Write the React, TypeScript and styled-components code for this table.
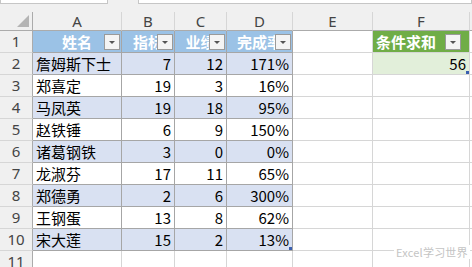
import React from "react";
import styled, { createGlobalStyle } from "styled-components";

const GlobalStyle = createGlobalStyle`
  html, body {
    margin: 0;
    padding: 0;
    background: #ffffff;
  }
  body {
    font-family: "Noto Sans CJK SC", "Noto Sans", sans-serif;
    overflow: hidden;
  }
`;

const COLS = ["A", "B", "C", "D", "E", "F"];
const HEADERS = ["姓名", "指标", "业绩", "完成率"];

const rows = [
  ["詹姆斯下士", 7, 12, "171%"],
  ["郑喜定", 19, 3, "16%"],
  ["马凤英", 19, 18, "95%"],
  ["赵铁锤", 6, 9, "150%"],
  ["诸葛钢铁", 3, 0, "0%"],
  ["龙淑芬", 17, 11, "65%"],
  ["郑德勇", 2, 6, "300%"],
  ["王钢蛋", 13, 8, "62%"],
  ["宋大莲", 15, 2, "13%"],
];

const Page = styled.div`
  position: relative;
  width: 472px;
  height: 267px;
  overflow: hidden;
  background: #f0f0f0;
`;

const TopStrip = styled.div`
  display: flex;
  height: 12px;
  gap: 30px;
`;

const TopBox = styled.div<{ $w: string }>`
  width: ${(p) => p.$w};
  flex: ${(p) => (p.$w === "auto" ? 1 : "none")};
  height: 3px;
  background: #ffffff;
  border: 1px solid #c6c6c6;
  border-top: none;
`;

const Grid = styled.div`
  display: grid;
  grid-template-columns: 33px 89px 53px 52px 66px 80px 97px 1fr;
  grid-template-rows: 19px;
  grid-auto-rows: 22px;
  background: #ffffff;
`;

const ColHead = styled.div`
  box-sizing: border-box;
  background: #f0f0f0;
  border-right: 1px solid #d6d6d6;
  border-bottom: 1px solid #ababab;
  color: #444444;
  font-family: "Noto Sans", "DejaVu Sans", sans-serif;
  font-size: 15px;
  line-height: 18px;
  text-align: center;
`;

const Corner = styled.div`
  box-sizing: border-box;
  position: relative;
  background: #f0f0f0;
  border-right: 1px solid #ababab;
  border-bottom: 1px solid #ababab;
  &::after {
    content: "";
    position: absolute;
    right: 3px;
    bottom: 3px;
    width: 0;
    height: 0;
    border-left: 12px solid transparent;
    border-bottom: 12px solid #b4b4b4;
  }
`;

const RowHead = styled.div`
  box-sizing: border-box;
  background: #f0f0f0;
  border-right: 1px solid #ababab;
  border-bottom: 1px solid #d6d6d6;
  color: #444444;
  font-family: "Noto Sans", "DejaVu Sans", sans-serif;
  font-size: 15px;
  line-height: 21px;
  text-align: center;
`;

type Tone = "plain" | "band" | "head" | "green" | "mint" | "empty";

const toneBg: Record<Tone, string> = {
  plain: "#ffffff",
  band: "#d9e1f2",
  head: "#9bc2e6",
  green: "#70ad47",
  mint: "#e2efda",
  empty: "#ffffff",
};

const inTable = (t: Tone) => t === "plain" || t === "band" || t === "head";

const Cell = styled.div<{ $tone: Tone; $align?: "left" | "right" | "center" }>`
  box-sizing: border-box;
  position: relative;
  overflow: hidden;
  white-space: nowrap;
  background: ${(p) => toneBg[p.$tone]};
  border-right: 1px solid ${(p) => (inTable(p.$tone) ? "#a6a6a6" : "#d6d6d6")};
  border-bottom: 1px solid ${(p) => (inTable(p.$tone) ? "#a6a6a6" : "#d6d6d6")};
  color: ${(p) => (p.$tone === "head" || p.$tone === "green" ? "#ffffff" : "#000000")};
  font-weight: ${(p) => (p.$tone === "head" || p.$tone === "green" ? 700 : 400)};
  font-size: 15px;
  line-height: 21px;
  text-align: ${(p) => p.$align || "left"};
  padding: 0 3px;
`;

const FilterBtn = styled.span<{ $right?: number }>`
  position: absolute;
  top: 3px;
  right: ${(p) => p.$right ?? 1}px;
  box-sizing: border-box;
  width: 16px;
  height: 16px;
  background: #f4f4f4;
  border: 1px solid #9a9a9a;
  &::after {
    content: "";
    position: absolute;
    left: 4px;
    top: 6px;
    border-left: 3px solid transparent;
    border-right: 3px solid transparent;
    border-top: 3px solid #555555;
  }
`;

const FillHandle = styled.span`
  position: absolute;
  right: 0;
  bottom: 0;
  width: 3px;
  height: 3px;
  background: #3a5fb0;
`;

const Watermark = styled.div`
  position: absolute;
  left: 394px;
  top: 245px;
  padding: 0 2px;
  background: #ffffff;
  color: #c4c4c4;
  font-size: 11px;
  line-height: 14px;
  letter-spacing: 0.2px;
  white-space: nowrap;
`;

export default function App() {
  const totalRows = 11;
  return (
    <Page>
      <GlobalStyle />
      <TopStrip>
        <TopBox $w="106px" />
        <TopBox $w="auto" />
      </TopStrip>
      <Grid>
        <Corner />
        {COLS.map((c) => (
          <ColHead key={c}>{c}</ColHead>
        ))}
        <ColHead />

        {Array.from({ length: totalRows }).map((_, i) => {
          const r = i + 1;
          const tone: Tone = r === 1 ? "head" : r <= 10 ? (r % 2 === 0 ? "band" : "plain") : "empty";
          const data = r >= 2 && r <= 10 ? rows[r - 2] : null;
          return (
            <React.Fragment key={r}>
              <RowHead>{r}</RowHead>
              {r === 1 &&
                HEADERS.map((h) => (
                  <Cell key={h} $tone="head" $align="center">
                    {h}
                    <FilterBtn />
                  </Cell>
                ))}
              {data &&
                data.map((v, j) => (
                  <Cell key={j} $tone={tone} $align={j === 0 ? "left" : "right"}>
                    {v}
                    {r === 10 && j === 3 && <FillHandle />}
                  </Cell>
                ))}
              {r === 11 && [0, 1, 2, 3].map((j) => <Cell key={j} $tone="empty" />)}
              <Cell $tone="empty" />
              {r === 1 ? (
                <Cell $tone="green">
                  条件求和
                  <FilterBtn $right={8} />
                </Cell>
              ) : r === 2 ? (
                <Cell $tone="mint" $align="right">
                  56
                  <FillHandle />
                </Cell>
              ) : (
                <Cell $tone="empty" />
              )}
              <Cell $tone="empty" />
            </React.Fragment>
          );
        })}
      </Grid>
      <Watermark>Excel学习世界</Watermark>
    </Page>
  );
}
